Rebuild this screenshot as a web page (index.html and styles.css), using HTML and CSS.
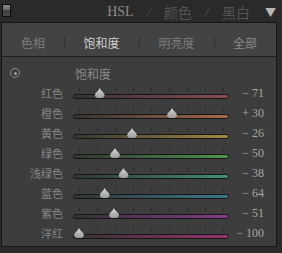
FILE: index.html
```html
<!DOCTYPE html>
<html>
<head>
<meta charset="utf-8">
<link rel="stylesheet" href="styles.css">
</head>
<body>
<div class="header">
  <span class="toggle"></span>
  <div class="title">
    <span class="t-hsl">HSL</span>
    <span class="slash">/</span>
    <span class="t-dim">颜色</span>
    <span class="slash">/</span>
    <span class="t-dim">黑白</span>
  </div>
  <span class="caret">▼</span>
</div>
<div class="panel">
  <div class="tabs">
    <div class="tab">色相</div>
    <div class="tab sep active">饱和度</div>
    <div class="tab sep">明亮度</div>
    <div class="tab sep last">全部</div>
  </div>
  <div class="content">
    <div class="row heading">
      <span class="radio"><span class="dot"></span></span>
      <span class="htext">饱和度</span>
    </div>
    <div class="row"><span class="label">红色</span><div class="slider"><div class="track red"></div><span class="thumb" style="left:21.7px"></span></div><span class="val">− 71</span></div>
    <div class="row"><span class="label">橙色</span><div class="slider"><div class="track orange"></div><span class="thumb" style="left:94px"></span></div><span class="val">+ 30</span></div>
    <div class="row"><span class="label">黄色</span><div class="slider"><div class="track yellow"></div><span class="thumb" style="left:54px"></span></div><span class="val">− 26</span></div>
    <div class="row"><span class="label">绿色</span><div class="slider"><div class="track green"></div><span class="thumb" style="left:37px"></span></div><span class="val">− 50</span></div>
    <div class="row"><span class="label">浅绿色</span><div class="slider"><div class="track aqua"></div><span class="thumb" style="left:45.5px"></span></div><span class="val">− 38</span></div>
    <div class="row"><span class="label">蓝色</span><div class="slider"><div class="track blue"></div><span class="thumb" style="left:26.7px"></span></div><span class="val">− 64</span></div>
    <div class="row"><span class="label">紫色</span><div class="slider"><div class="track purple"></div><span class="thumb" style="left:36px"></span></div><span class="val">− 51</span></div>
    <div class="row"><span class="label">洋红</span><div class="slider"><div class="track magenta"></div><span class="thumb" style="left:1px"></span></div><span class="val">− 100</span></div>
  </div>
</div>
</body>
</html>
```
FILE: styles.css
```css
* { box-sizing: border-box; }
html, body { margin: 0; padding: 0; }
body {
  width: 282px;
  height: 253px;
  background: #2a2a2a;
  font-family: "Noto Sans CJK SC", "Noto Sans", sans-serif;
  overflow: hidden;
}
.header {
  height: 22px;
  display: flex;
  align-items: center;
  padding: 0 6px 0 2px;
}
.toggle {
  width: 9px;
  height: 13px;
  margin-top: -1px;
  border: 1px solid #0e0e0e;
  background: linear-gradient(to bottom, #8a8a8a 0%, #6a6a6a 45%, #3e3e3e 50%, #4a4a4a 100%);
}
.title {
  margin-left: auto;
  display: flex;
  align-items: center;
  gap: 13px;
  padding-top: 2px;
  font-size: 14px;
  line-height: 18px;
}
.t-hsl {
  font-family: "Liberation Serif", serif;
  color: #8a8a8a;
  font-size: 14px;
}
.t-dim { color: #545454; font-size: 14px; }
.slash {
  font-family: "Liberation Serif", serif;
  font-style: italic;
  color: #4a4a4a;
  font-size: 15px;
}
.caret {
  margin-left: 15px;
  color: #b8b8b8;
  font-size: 11px;
  padding-top: 1px;
}
.panel {
  margin-left: 1px;
  width: 276px;
  border: 1px solid #171717;
  background: #3d3d3d;
}
.tabs {
  height: 34px;
  display: grid;
  grid-template-columns: 62px 75px 75px 1fr;
  background: #434343;
  border-bottom: 1px solid #1e1e1e;
  padding-top: 5px;
}
.tab {
  display: flex;
  align-items: center;
  justify-content: center;
  font-size: 12px;
  color: #7c7c7c;
  position: relative;
}
.tab.sep::before {
  content: "";
  position: absolute;
  left: 0;
  top: 8px;
  width: 1px;
  height: 12px;
  background: #333;
}
.tab.active { color: #cfcfcf; }
.tab.last { color: #8a8a8a; }
.content {
  padding: 6px 12px 3px 0;
}
.row {
  height: 20px;
  display: grid;
  grid-template-columns: 71px 156px 1fr;
  align-items: center;
}
.label {
  text-align: right;
  padding-right: 10px;
  font-size: 11px;
  color: #858585;
  line-height: 14px;
}
.heading .radio {
  margin-left: 8px;
  width: 10px;
  height: 10px;
  border: 1px solid #8a8a8a;
  border-radius: 50%;
  display: flex;
  align-items: center;
  justify-content: center;
}
.radio .dot {
  width: 3px;
  height: 3px;
  border-radius: 50%;
  background: #a0a0a0;
}
.htext {
  padding-left: 2px;
  font-size: 12px;
  color: #8a8a8a;
}
.slider {
  position: relative;
  height: 20px;
  align-self: stretch;
}
.slider::before {
  content: "";
  position: absolute;
  left: 6px;
  top: 5px;
  width: 145px;
  height: 3px;
  background: repeating-linear-gradient(to right, #282828 0, #282828 1px, transparent 1px, transparent 18px);
}
.track {
  position: absolute;
  left: 0;
  right: 0;
  top: 11px;
  height: 5px;
  border: 1px solid #161616;
  border-radius: 3px;
}
.red { background: linear-gradient(to right, #363232, #8c4c52); }
.orange { background: linear-gradient(to right, #363330, #a5684a); }
.yellow { background: linear-gradient(to right, #363530, #a08944); }
.green { background: linear-gradient(to right, #313631, #4f944e); }
.aqua { background: linear-gradient(to right, #303634, #44907c); }
.blue { background: linear-gradient(to right, #303436, #3c7888); }
.purple { background: linear-gradient(to right, #343036, #853c86); }
.magenta { background: linear-gradient(to right, #363034, #98336e); }
.thumb {
  position: absolute;
  top: 5px;
  width: 10px;
  height: 10px;
  background: linear-gradient(to bottom, #d8d8d8, #9a9a9a);
  clip-path: polygon(50% 0, 62% 20%, 90% 50%, 100% 70%, 92% 90%, 75% 100%, 25% 100%, 8% 90%, 0 70%, 10% 50%, 38% 20%);
}
.val {
  text-align: right;
  white-space: nowrap;
  font-family: "Liberation Serif", serif;
  font-size: 12px;
  color: #a6a6a6;
}
```
